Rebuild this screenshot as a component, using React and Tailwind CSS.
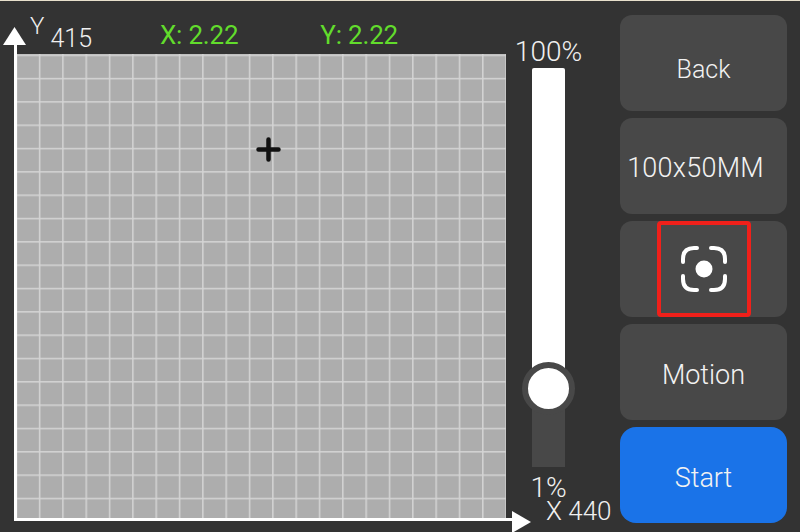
const buttons = [
  { label: 'Back', className: 'pt-[13px] text-[25px]' },
  { label: '100x50MM', className: 'pt-[5px] pr-[16px] text-[27px] tracking-[0.25px]' },
  { label: null, className: '' },
  { label: 'Motion', className: 'pt-[6px] text-[27px]' },
]

function FocusIcon() {
  return (
    <svg width="48" height="48" viewBox="0 0 48 48" fill="none" stroke="white" strokeWidth="4" strokeLinecap="round">
      <path d="M3 17 V14 Q3 3 14 3 H17" />
      <path d="M31 3 H34 Q45 3 45 14 V17" />
      <path d="M3 31 V34 Q3 45 14 45 H17" />
      <path d="M45 31 V34 Q45 45 34 45 H31" />
      <circle cx="24" cy="24" r="8.5" fill="white" stroke="none" />
    </svg>
  )
}

function ActionButton({ label, className }) {
  return (
    <button className={`flex h-[96px] w-full items-center justify-center rounded-xl bg-[#484848] font-light text-[#f2f2f2] ${className}`}>
      {label ?? (
        <span className="grid h-[96px] w-[94px] place-items-center rounded-[4px] border-4 border-[#f0201a]">
          <FocusIcon />
        </span>
      )}
    </button>
  )
}

export default function App() {
  return (
    <div className="relative flex h-[532px] w-[800px] overflow-hidden border-t border-[#e8e0cc] bg-[#333333] font-['Roboto',sans-serif] text-[#f0f0f0]">
      {/* plot area */}
      <div className="flex w-[506px] flex-col pl-4">
        <div className="flex h-[53px] shrink-0 items-start text-[26px] font-light leading-none">
          <span className="ml-[14px] mt-[13px] text-[24px]">Y</span>
          <span className="ml-[6px] mt-[25px] text-[25px]">415</span>
          <span className="ml-[68px] mt-[21px] font-normal tracking-[-0.2px] text-[#62dc2c]">X: 2.22</span>
          <span className="ml-[82px] mt-[21px] font-normal tracking-[-0.2px] text-[#62dc2c]">Y: 2.22</span>
        </div>
        <div className="relative h-[465px] bg-[#adadad] bg-[linear-gradient(to_right,#d4d4d4_1px,transparent_2px),linear-gradient(to_bottom,#d4d4d4_1px,transparent_2px)] bg-size-[23.33px_23.33px] bg-position-[-0.5px_0.5px]">
          <svg className="absolute left-[240px] top-[83px]" width="25" height="25" viewBox="0 0 25 25" stroke="#111" strokeWidth="4.5" strokeLinecap="round">
            <path d="M12.5 2.5 V22.5 M2.5 12.5 H22.5" />
          </svg>
        </div>
      </div>

      {/* axes */}
      <div className="absolute left-[14px] top-[42px] h-[478px] w-[3px] bg-white" />
      <div className="absolute left-[14px] top-[517px] h-[3px] w-[500px] bg-white" />
      <svg className="absolute left-[3px] top-[26px]" width="23" height="19" viewBox="0 0 23 19">
        <path d="M11.5 0 L23 18 H0 Z" fill="white" />
      </svg>
      <svg className="absolute left-[511px] top-[510px]" width="20" height="22" viewBox="0 0 20 22">
        <path d="M20 11 L1 0 V22 Z" fill="white" />
      </svg>

      {/* brightness slider */}
      <div className="ml-[26px] flex w-[33px] flex-col items-center">
        <span className="mt-[37px] h-[30px] whitespace-nowrap text-[28px] font-light leading-none">100%</span>
        <div className="relative flex h-[399px] w-[33px] flex-col rounded-t-[2px] bg-[#484848]">
          <div className="h-[300px] rounded-t-[2px] bg-white" />
          <div className="absolute left-[-10px] top-[294px] h-[53px] w-[53px] rounded-full border-[6px] border-[#484848] bg-white" />
        </div>
        <span className="mt-[11px] text-[28px] font-light leading-[20px]">1%</span>
      </div>
      <span className="absolute left-[546px] top-[500px] whitespace-nowrap text-[26px] font-light leading-[20px]">X 440</span>

      {/* actions */}
      <div className="ml-[55px] flex w-[167px] flex-col gap-[7px] pt-[14px]">
        {buttons.map((b, i) => (
          <ActionButton key={i} label={b.label} className={b.className} />
        ))}
        <button className="flex h-[96px] w-full items-center justify-center rounded-2xl bg-[#1a73e8] pt-[6px] text-[27px] font-light text-[#f2f2f2]">
          Start
        </button>
      </div>
    </div>
  )
}
